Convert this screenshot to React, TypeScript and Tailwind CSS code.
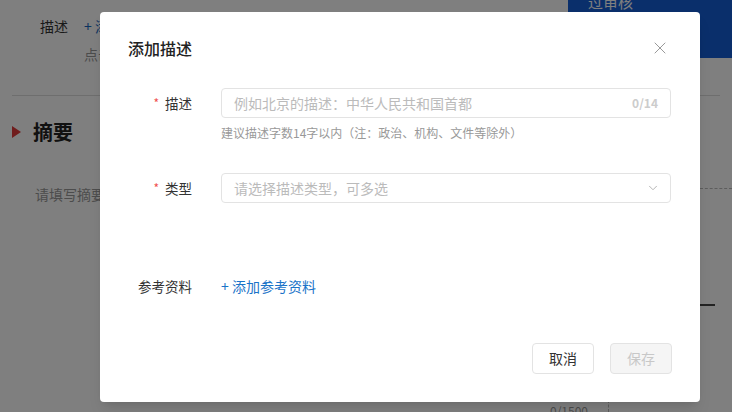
import { X, ChevronDown } from "lucide-react";

function BackgroundPage() {
  return (
    <div className="relative h-[412px] w-[732px] overflow-hidden bg-white text-[#333]">
      <div className="flex">
        <div className="flex-1 pl-[40px] pt-[16px]">
          <div className="flex items-center gap-[16px] text-[14px] leading-[20px]">
            <span>描述</span>
            <span className="text-[#1565c0]">+ 添加描述</span>
          </div>
          <div className="mt-[8px] pl-[44px] text-[14px] leading-[20px] text-[#999]">点击添加</div>
        </div>
        <div className="-mt-[10px] h-[68px] w-[164px] bg-[#145ed6] pl-[20px] text-[15px] leading-[24px] text-white">
          过审核
        </div>
      </div>

      <div className="mx-[12px] mt-[31px] border-t border-[#ddd]" />

      <div className="mt-[22px] flex items-center gap-[12px] pl-[12px]">
        <span className="h-0 w-0 border-y-[6px] border-l-[9px] border-y-transparent border-l-[#e03a3a]" />
        <span className="text-[20px] font-bold leading-[28px] text-[#222]">摘要</span>
      </div>
      <div className="mt-[38px] pl-[35px] text-[14px] leading-[20px] text-[#999]">请填写摘要内容</div>

      <div className="absolute left-[700px] top-[188px] w-[32px] border-t border-dashed border-[#bbb]" />
      <div className="absolute left-[700px] top-[304px] h-[2px] w-[15px] bg-[#444]" />
      <div className="absolute left-[608px] top-[400px] h-[12px] border-l border-dashed border-[#bbb]" />
      <div className="absolute left-[550px] top-[403px] text-[12px] leading-[16px] text-[#999]">0/1500</div>
    </div>
  );
}

function FormRow({ label, required, children }: { label: string; required?: boolean; children: React.ReactNode }) {
  return (
    <div className="flex items-start">
      <div className="flex h-[30px] w-[92px] items-center justify-end text-[13.5px] text-[#333]">
        {required && <span className="mr-[6px] text-[12px] text-[#f05050]">*</span>}
        {label}
      </div>
      <div className="ml-[29px] w-[450px]">{children}</div>
    </div>
  );
}

export default function App() {
  return (
    <div className="relative h-[412px] w-[732px] overflow-hidden font-['Noto_Sans_CJK_SC','Liberation_Sans',sans-serif]">
      <BackgroundPage />
      <div className="absolute inset-0 bg-black/50" />

      <div className="absolute left-[100px] top-[12px] flex h-[390px] w-[600px] flex-col rounded-[4px] bg-white shadow-lg">
        <div className="flex h-[72px] items-center justify-between pl-[28px] pr-[30px]">
          <h2 className="text-[16px] font-medium leading-[22px] text-[#222]">添加描述</h2>
          <X className="h-[20px] w-[20px] text-[#999]" strokeWidth={1.2} />
        </div>

        <div className="mt-[4px] flex flex-col">
          <FormRow label="描述" required>
            <div className="flex h-[30px] items-center justify-between rounded-[4px] border border-[#e3e3e3] px-[12px]">
              <span className="text-[14px] text-[#bbb]">例如北京的描述：中华人民共和国首都</span>
              <span className="text-[12px] font-bold text-[#ccc]">0/14</span>
            </div>
            <div className="mt-[6px] text-[12px] leading-[18px] text-[#999]">
              建议描述字数14字以内（注：政治、机构、文件等除外）
            </div>
          </FormRow>

          <div className="mt-[31px]">
            <FormRow label="类型" required>
              <div className="flex h-[30px] items-center justify-between rounded-[4px] border border-[#e3e3e3] pl-[12px] pr-[10px]">
                <span className="text-[14px] text-[#bbb]">请选择描述类型，可多选</span>
                <ChevronDown className="h-[14px] w-[14px] text-[#aaa]" strokeWidth={1.5} />
              </div>
            </FormRow>
          </div>

          <div className="mt-[68px]">
            <FormRow label="参考资料">
              <div className="flex h-[30px] items-center text-[14px] text-[#1a73c8]">+ 添加参考资料</div>
            </FormRow>
          </div>
        </div>

        <div className="mt-auto flex justify-end gap-[16px] pb-[28px] pr-[28px]">
          <button className="h-[31px] w-[62px] rounded-[4px] border border-[#e3e3e3] bg-white text-[14px] text-[#333]">
            取消
          </button>
          <button className="h-[31px] w-[62px] rounded-[4px] border border-[#e3e3e3] bg-[#f5f5f5] text-[14px] text-[#c8c8c8]">
            保存
          </button>
        </div>
      </div>
    </div>
  );
}
